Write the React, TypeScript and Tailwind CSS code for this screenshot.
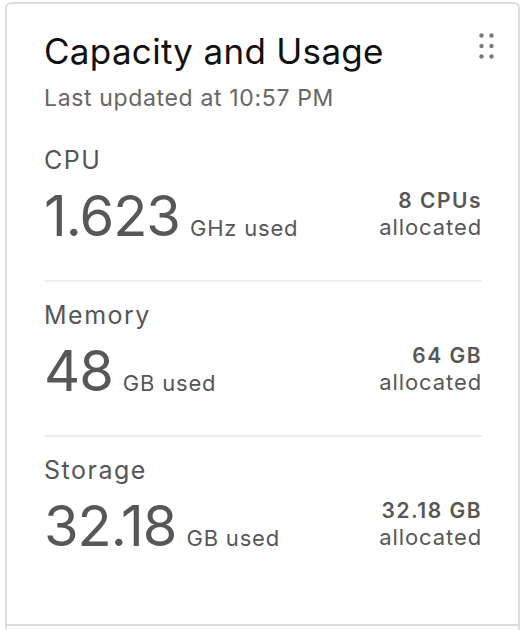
const SECTIONS = [
  { label: "CPU", value: "1.623", unit: "GHz used", total: "8 CPUs" },
  { label: "Memory", value: "48", unit: "GB used", total: "64 GB" },
  { label: "Storage", value: "32.18", unit: "GB used", total: "32.18 GB" },
];

/** Six-dot drag grip in the card's top-right corner. */
function DragHandle() {
  return (
    <svg width="16" height="26" viewBox="0 0 16 26" className="text-[#7a7a7a]">
      {[2.5, 13, 23.5].map((y) => (
        <g key={y}>
          <circle cx="2.5" cy={y} r="2.2" fill="currentColor" />
          <circle cx="12.5" cy={y} r="2.2" fill="currentColor" />
        </g>
      ))}
    </svg>
  );
}

export default function App() {
  return (
    <div className="h-[630px] w-[522px] overflow-hidden bg-white pl-[5px] pr-[2px] pt-[2px] font-['Inter',sans-serif]">
      <div className="h-[700px] rounded-md border-2 border-[#dddddd] bg-white">
        <div className="flex items-start justify-between pl-[37px] pr-[23px] pt-[27px]">
          <div>
            <h1 className="text-[35px] leading-[40px] tracking-[0.3px] text-[#111]">
              Capacity and Usage
            </h1>
            <p className="mt-[13px] text-[23px] leading-[28px] tracking-[0.65px] text-[#666]">
              Last updated at 10:57 PM
            </p>
          </div>
          <div className="pt-[2px]">
            <DragHandle />
          </div>
        </div>

        <div className="mt-[15px] pl-[37px] pr-[36px]">
          {SECTIONS.map((s, i) => (
            <div
              key={s.label}
              className={
                i < SECTIONS.length - 1
                  ? "border-b-2 border-[#eeeeee] pb-[36px] pt-[18px]"
                  : "pt-[18px]"
              }
            >
              <div className="text-[25px] leading-[30px] tracking-[1.5px] text-[#565656]">
                {s.label}
              </div>
              <div className="mt-[13px] flex items-start justify-between text-[#575757]">
                <div className="flex items-baseline gap-[10px]">
                  <span className="text-[56px] leading-[56px] tracking-[-1px]">{s.value}</span>
                  <span className="text-[22px] leading-[28px] tracking-[0.8px]">{s.unit}</span>
                </div>
                <div className="pt-[1px] text-right">
                  <div className="text-[21px] font-semibold leading-[24px] tracking-[1.5px]">
                    {s.total}
                  </div>
                  <div className="text-[22px] leading-[28px] tracking-[0.9px]">allocated</div>
                </div>
              </div>
            </div>
          ))}
        </div>
        <div className="mt-[70px] border-t-2 border-[#dddddd]" />
      </div>
    </div>
  );
}
